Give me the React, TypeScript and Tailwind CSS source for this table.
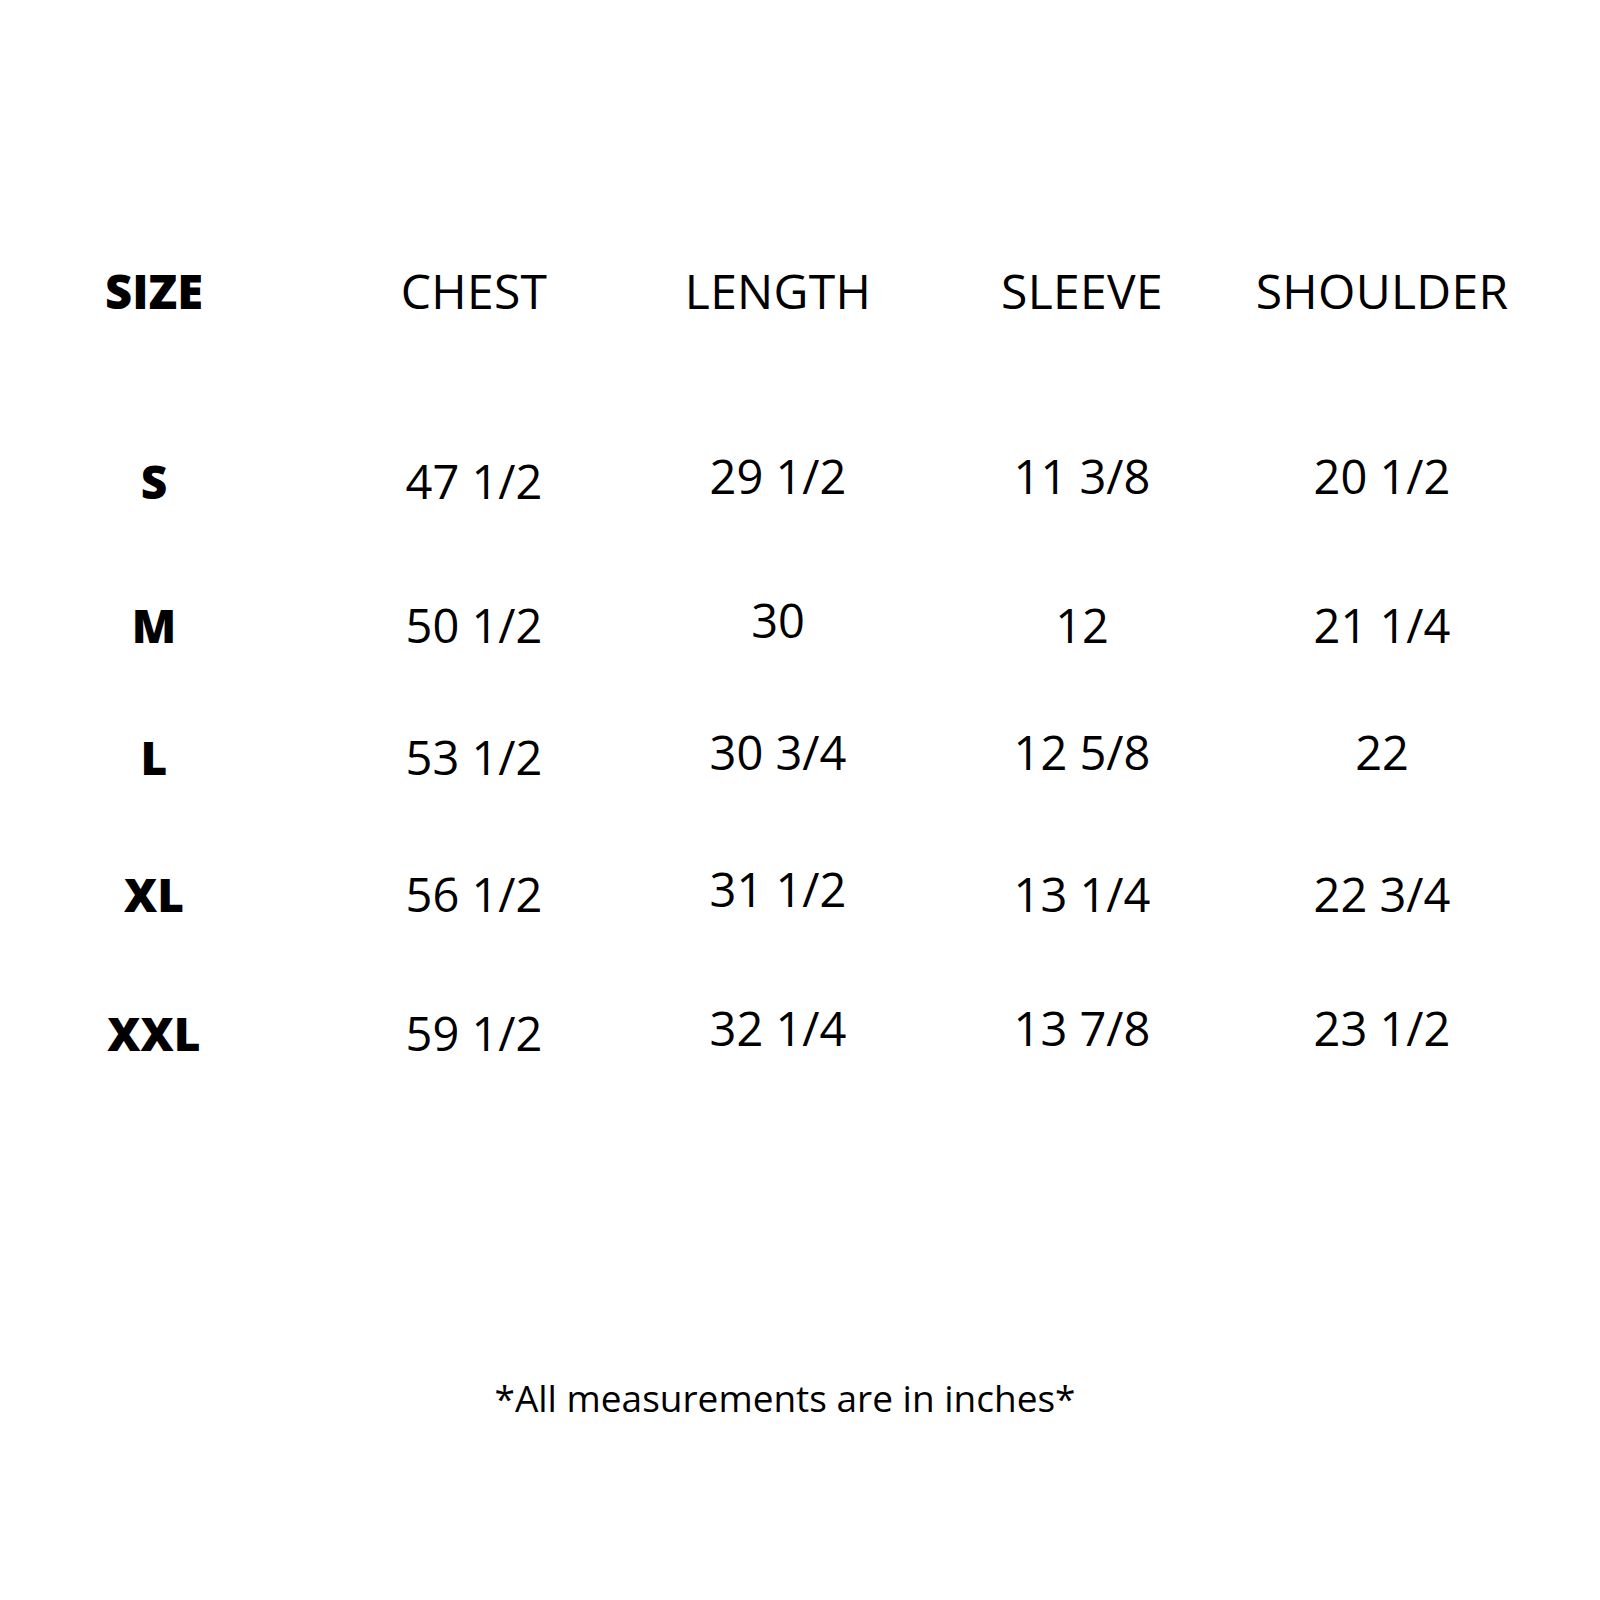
import React from 'react';

type Cell = { text: string; lift?: boolean };

const header: Cell[] = [
  { text: 'SIZE' },
  { text: 'CHEST' },
  { text: 'LENGTH', lift: true },
  { text: 'SLEEVE' },
  { text: 'SHOULDER' },
];

const rows: { size: string; top: string; cells: Cell[] }[] = [
  {
    size: 'S',
    top: 'mt-[130px]',
    cells: [{ text: '47 1/2' }, { text: '29 1/2', lift: true }, { text: '11 3/8', lift: true }, { text: '20 1/2', lift: true }],
  },
  {
    size: 'M',
    top: 'mt-[84px]',
    cells: [{ text: '50 1/2' }, { text: '30', lift: true }, { text: '12' }, { text: '21 1/4' }],
  },
  {
    size: 'L',
    top: 'mt-[72px]',
    cells: [{ text: '53 1/2' }, { text: '30 3/4', lift: true }, { text: '12 5/8', lift: true }, { text: '22', lift: true }],
  },
  {
    size: 'XL',
    top: 'mt-[77px]',
    cells: [{ text: '56 1/2' }, { text: '31 1/2', lift: true }, { text: '13 1/4' }, { text: '22 3/4' }],
  },
  {
    size: 'XXL',
    top: 'mt-[79px]',
    cells: [{ text: '59 1/2' }, { text: '32 1/4', lift: true }, { text: '13 7/8', lift: true }, { text: '23 1/2', lift: true }],
  },
];

const grid = 'grid grid-cols-[308px_332px_276px_332px_268px] h-[60px]';

function ValueCell({ cell }: { cell: Cell }) {
  return (
    <div className={`flex items-center justify-center ${cell.lift ? 'pb-[9px]' : ''}`}>
      <span className="text-[47px] leading-none whitespace-nowrap">{cell.text}</span>
    </div>
  );
}

export default function App() {
  return (
    <div
      className="w-[1600px] h-[1600px] bg-white text-black flex flex-col"
      style={{ fontFamily: '"Open Sans", "Liberation Sans", sans-serif' }}
    >
      <div className={`${grid} mt-[261px]`}>
        <div className="flex items-center justify-center">
          <span className="text-[47px] leading-none font-extrabold">SIZE</span>
        </div>
        {header.slice(1).map((h) => (
          <div key={h.text} className="flex items-center justify-center">
            <span className="text-[48px] leading-none tracking-[0.3px]">{h.text}</span>
          </div>
        ))}
      </div>

      {rows.map((r) => (
        <div key={r.size} className={`${grid} ${r.top}`}>
          <div className="flex items-center justify-center">
            <span className="text-[46px] leading-none font-extrabold">{r.size}</span>
          </div>
          {r.cells.map((c, i) => (
            <ValueCell key={i} cell={c} />
          ))}
        </div>
      ))}

      <div className="mt-[316px] w-[1570px] flex justify-center">
        <p className="text-[37px] leading-none">*All measurements are in inches*</p>
      </div>
    </div>
  );
}
